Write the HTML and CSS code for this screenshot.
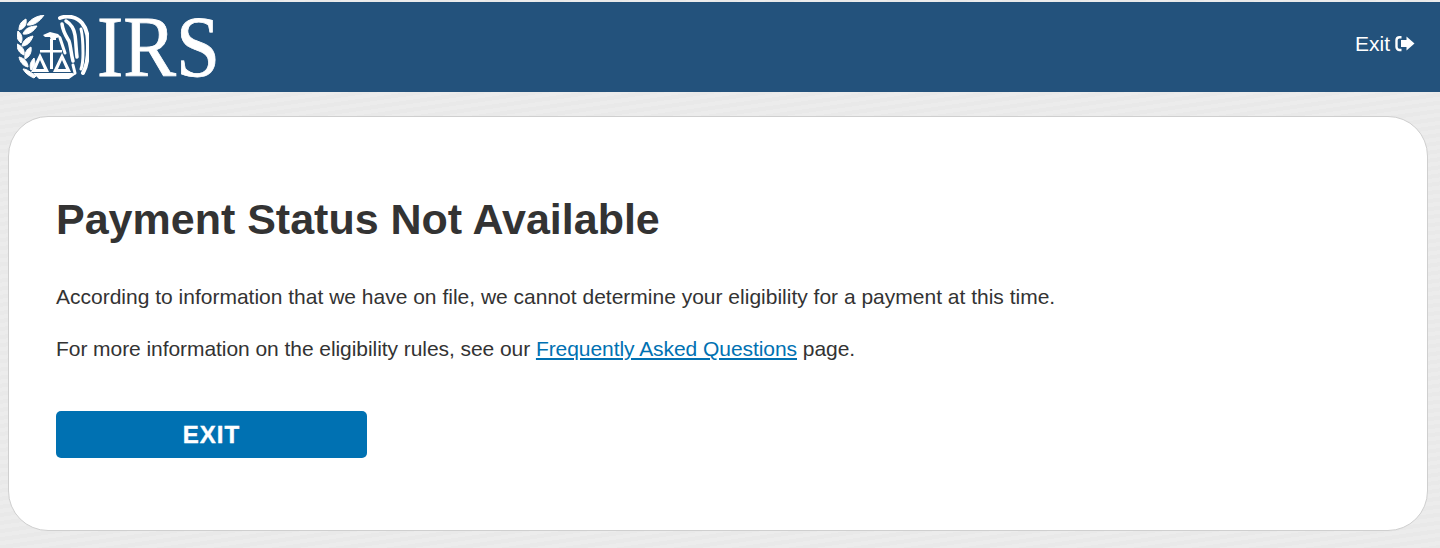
FILE: index.html
```html
<!DOCTYPE html>
<html lang="en">
<head>
    <meta charset="UTF-8">
    <title>Payment Status Not Available</title>
    <link rel="stylesheet" href="styles.css">
</head>
<body>
    <header class="site-header">
        <a class="logo" href="#">
            <svg class="logo-seal" viewBox="7 5 72 64" width="72" height="64" aria-hidden="true">
                <!-- laurel -->
                <g fill="#fff" stroke="#fff" stroke-width="1">
                    <path d="M34 5C28 6 21 8 17 15 24 16 30 11 34 5z"/>
                    <path d="M16 9c-4 2-7 5-7 11 5-1 8-5 7-11z"/>
                    <path d="M27 16c-6 0-12 2-14 8 6 1 11-3 14-8z"/>
                    <path d="M8 21c-2 4-1 9 3 12 2-4 1-9-3-12z"/>
                    <path d="M23 26c-5 1-10 4-11 10 5 0 9-4 11-10z"/>
                    <path d="M7 34c0 5 2 9 7 11 1-5-2-9-7-11z"/>
                    <path d="M21 37c-4 2-7 6-6 12 4-2 7-6 6-12z"/>
                    <path d="M9 47c1 5 4 9 9 10 0-5-4-9-9-10z"/>
                    <path d="M24 48c-3 3-5 7-3 12 3-3 5-7 3-12z"/>
                    <path d="M13 59c4 0 7 3 13 7l-2 2c-5-2-9-5-11-9z"/>
                </g>
                <!-- column and scales -->
                <g fill="#fff">
                    <path d="M33 25l7-3 8 2 3 3-5 1v2h-5l-1-3h-5z"/>
                    <path d="M40 29h3v30h-3z"/>
                    <path d="M30 40h22v2.500H30z"/>
                    <path fill-rule="evenodd" d="M30 43l9 19H21zM30 50l-4 9h8z"/>
                    <path fill-rule="evenodd" d="M52 43l9 19H43zM52 50l-4 9h8z"/>
                    <path d="M23 63h39l4 1-7 5H29z"/>
                </g>
                <!-- eagle -->
                <g fill="none" stroke="#fff" stroke-linecap="round">
                    <path stroke-width="4" d="M50 8c8-3 17-1 22 5 6 7 6 16 6 25s-1 18-5 25"/>
                    <path stroke-width="3.500" d="M56 11c5 3 8 8 9 14 1 7 1 14 2 22"/>
                    <path stroke-width="3" d="M71 19c2 8 2 17 2 24 0 6 0 11-2 16"/>
                    <path stroke-width="3.500" d="M52 14c1 8 4 12 7 17 2 6 2 13 4 20"/>
                    <path stroke-width="3" d="M50 28l5 15"/>
                    <path stroke-width="3" d="M63 55l2 8"/>
                </g>
            </svg>
            <span class="logo-text">IRS</span>
        </a>
        <a class="header-exit" href="#">
            Exit
            <svg class="exit-icon" viewBox="0 0 20 17" width="20" height="17" aria-hidden="true">
                <path fill="none" stroke="#fff" stroke-width="2.400" d="M6.500 2.200H4.500A3 3 0 0 0 1.500 5v7a3 3 0 0 0 3 3h2"/>
                <path fill="#fff" d="M6 5h5.500V1.500l8 7-8 7V12H6z"/>
            </svg>
        </a>
    </header>

    <main class="card">
        <h1>Payment Status Not Available</h1>
        <p>According to information that we have on file, we cannot determine your eligibility for a payment at this time.</p>
        <p class="faq-line">For more information on the eligibility rules, see our <a href="#">Frequently Asked Questions</a> page.</p>
        <button class="exit-button" type="button">EXIT</button>
    </main>
</body>
</html>
```

FILE: styles.css
```css
html {
    background: #fff;
}

body {
    margin: 0;
    padding-top: 2px;
    height: 546px;
    overflow: hidden;
    font-family: "Liberation Sans", Arial, sans-serif;
    color: #333;
    background-color: #ebebeb;
    background-image: repeating-linear-gradient(172deg, #ececec 0, #ececec 4px, #e9e9e9 4px, #e9e9e9 8px);
}

.site-header {
    height: 90px;
    padding: 0 25px 0 17px;
    display: flex;
    align-items: center;
    justify-content: space-between;
    background: #23527c;
    color: #fff;
    box-sizing: border-box;
}

.logo {
    display: flex;
    align-items: center;
    gap: 8px;
    color: #fff;
    text-decoration: none;
}

.logo-seal {
    display: block;
}

.logo-text {
    font-family: "Liberation Serif", "Times New Roman", serif;
    font-size: 86px;
    line-height: 62px;
    transform: scaleX(0.92);
    transform-origin: left center;
    -webkit-text-stroke: 0.8px #fff;
}

.header-exit {
    display: flex;
    align-items: center;
    gap: 5px;
    margin-bottom: 7px;
    color: #fff;
    font-size: 21px;
    text-decoration: none;
}

.card {
    margin: 24px 12px 0 8px;
    height: 415px;
    padding: 78px 47px 0;
    box-sizing: border-box;
    background: #fff;
    border: 1px solid #cfcfcf;
    border-radius: 40px;
}

h1 {
    margin: 0 0 42px;
    font-size: 43px;
    line-height: 48px;
    font-weight: 700;
}

p {
    margin: 0 0 28px;
    font-size: 21px;
    line-height: 24px;
}

p a {
    color: #0071b2;
}

.faq-line {
    letter-spacing: -0.06px;
}

.exit-button {
    display: block;
    width: 311px;
    height: 47px;
    margin-top: 50px;
    border: none;
    border-radius: 5px;
    background: #0071b2;
    color: #fff;
    font-family: inherit;
    font-size: 24px;
    font-weight: 700;
    letter-spacing: 1px;
    -webkit-text-stroke: 0.4px #fff;
    cursor: pointer;
}
```
